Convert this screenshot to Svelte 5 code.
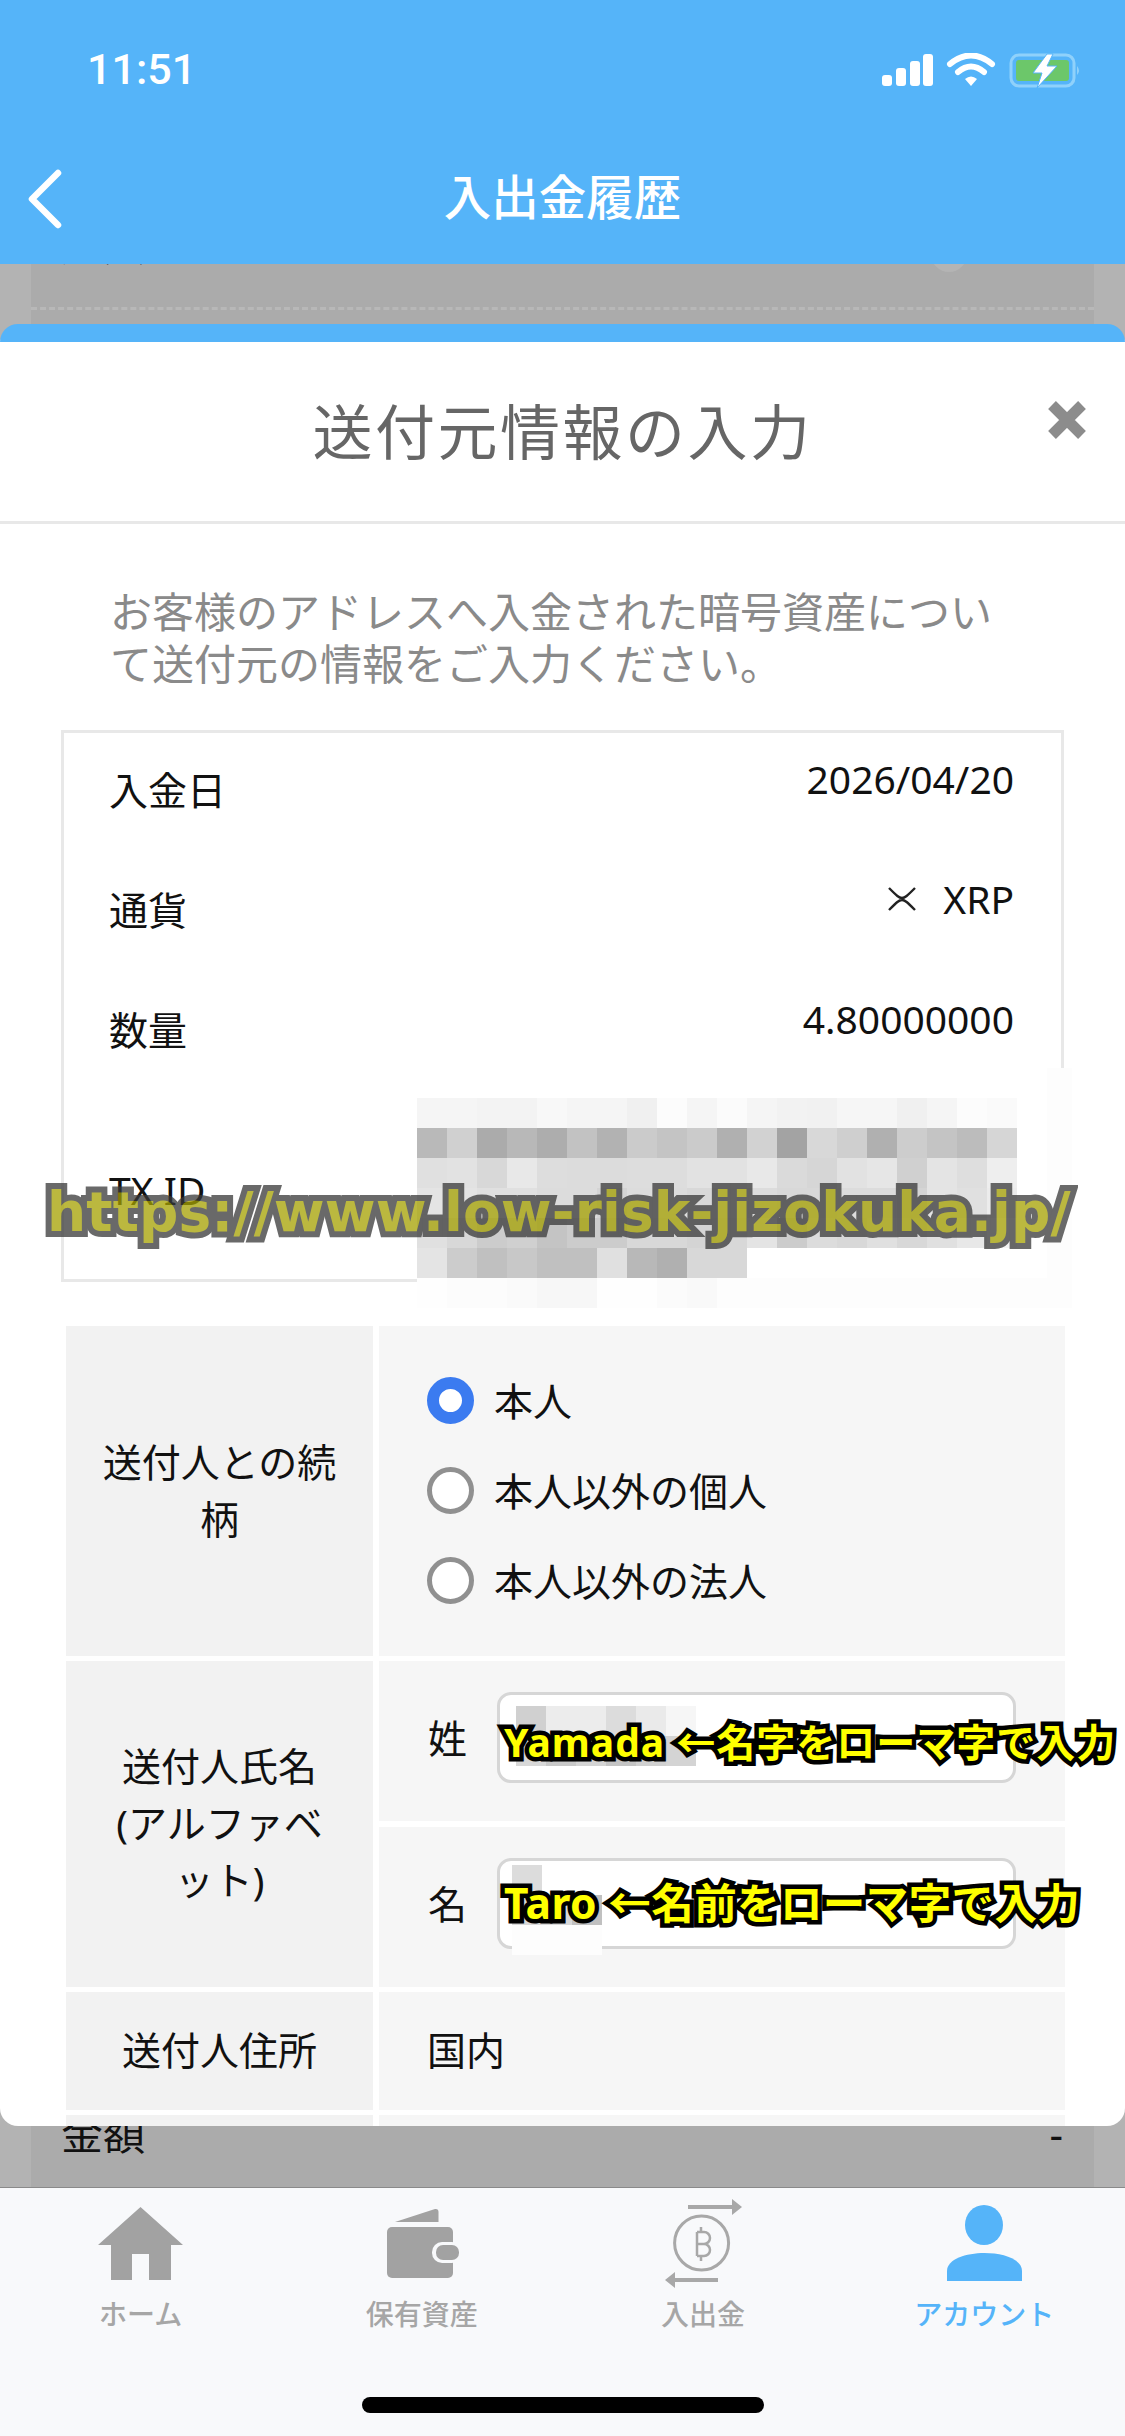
<script lang="ts">
  // mosaic cells that hide the tx id and the typed names
  const txRows = [
    ["#f5f5f5","#f5f5f5","#f3f3f3","#f3f3f3","#f8f8f8","#f5f5f5","#f5f5f5","#f0f0f0","#fcfcfc","#f5f5f5","#fbfbfb","#f5f5f5","#f2f2f2","#f1f1f1","#f6f6f6","#f6f6f6","#f0f0f0","#f5f5f5","#fcfcfc","#fafafa"],
    ["#b9b9b9","#d0d0d0","#ababab","#b8b8b8","#adadad","#c2c2c2","#b2b2b2","#cbcbcb","#c4c4c4","#cbcbcb","#b0b0b0","#d2d2d2","#a3a3a3","#d8d8d8","#cfcfcf","#b0b0b0","#cdcdcd","#c4c4c4","#bcbcbc","#d6d6d6"],
    ["#e0e0e0","#e2e2e2","#d8d8d8","#e8e8e8","#dddddd","#dcdcdc","#dcdcdc","#dddddd","#dddddd","#e2e2e2","#e2e2e2","#e8e8e8","#dadada","#d6d6d6","#e2e2e2","#e6e6e6","#d0d0d0","#e4e4e4","#dedede","#eeeeee"],
    ["#e4e4e4","#e4e4e4","#e0e0e0","#e0e0e0","#dcdcdc","#dcdcdc","#d4d4d4","#dcdcdc","#dcdcdc","#d8d8d8","#dcdcdc","#dcdcdc","#d8d8d8","#d8d8d8","#dcdcdc","#dcdcdc","#d4d4d4","#e4e4e4","#e0e0e0","#ececec"],
    ["#e0e0e0","#d8d8d8","#cccccc","#d0d0d0","#c4c4c4","#cccccc","#cccccc","#d8d8d8","#d8d8d8","#d4d4d4","#d8d8d8","#e4e4e4","#cccccc","#dcdcdc","#d8d8d8","#e0e0e0","#d8d8d8","#e0e0e0","#e8e8e8","#f4f4f4"],
    ["#e4e4e4","#cccccc","#c0c0c0","#c8c8c8","#c0c0c0","#c0c0c0","#e0e0e0","#b8b8b8","#b0b0b0","#d8d8d8","#d8d8d8"],
    ["#fefefe","#fcfcfc","#fcfcfc","#fafafa","#f7f7f7","#f7f7f7","#fefefe","#fefefe","#fbfbfb","#f9f9f9"]
  ];
  const lastNameRows = [
    ["#d0d0d0","#ececec","#ececec","#dcdcdc","#eaeaea","#f6f6f6"],
    ["#d8d8d8","#c8c8c8","#d4d4d4","#c4c4c4","#d0d0d0","#d4d4d4"]
  ];
  const firstNameRows = [["#dcdcdc"], ["#d8d8d8","#d8d8d8","#c0c0c0"]];

  const info = [
    { label: "入金日", value: "2026/04/20" },
    { label: "通貨", value: "XRP", coin: true },
    { label: "数量", value: "4.80000000" }
  ];
  const relations = ["本人", "本人以外の個人", "本人以外の法人"];
  const tabs = [
    { label: "ホーム", icon: "home" },
    { label: "保有資産", icon: "wallet" },
    { label: "入出金", icon: "coin" },
    { label: "アカウント", icon: "person", active: true }
  ];
</script>

<div class="page">
  <header class="top">
    <div class="status">
      <span class="time">11:51</span>
      <svg class="status-icons" viewBox="0 0 200 36" aria-hidden="true">
        <rect x="0" y="22" width="10" height="11" rx="3" fill="#fff" />
        <rect x="14" y="15" width="10" height="18" rx="3" fill="#fff" />
        <rect x="28" y="8" width="10" height="25" rx="3" fill="#fff" />
        <rect x="41" y="1" width="10" height="32" rx="3" fill="#fff" />
        <path d="M68 11 Q89 -6 110 11" fill="none" stroke="#fff" stroke-width="6" stroke-linecap="round" />
        <path d="M76 19 Q89 8 102 19" fill="none" stroke="#fff" stroke-width="6" stroke-linecap="round" />
        <path d="M83 26 Q89 21 95 26 L89 33Z" fill="#fff" />
        <rect x="129" y="2" width="63" height="31" rx="8" fill="none" stroke="#8fd1fb" stroke-width="3" />
        <rect x="134" y="7" width="53" height="21" rx="3" fill="#6cc76a" />
        <path d="M195 13 Q199 17.500 195 22Z" fill="#8fd1fb" />
        <path d="M165 1 L151 20 H160 L155 35 L175 13 H165 L171 1Z" fill="#fff" stroke="#55b4f9" stroke-width="1" />
      </svg>
    </div>
    <div class="nav">
      <svg class="back" viewBox="0 0 36 60" aria-hidden="true">
        <path d="M31 4 L5 30 L31 56" fill="none" stroke="#fff" stroke-width="6.500" stroke-linecap="round" stroke-linejoin="round" />
      </svg>
      <h1>入出金履歴</h1>
    </div>
  </header>

  <main class="behind">
    <div class="behind-card">
      <div class="behind-top">
        <span class="clipped">追入</span>
        <span class="dot"></span>
      </div>
      <div class="dashed"></div>
      <div class="behind-bottom">
        <span>金額</span>
        <span>-</span>
      </div>
    </div>
  </main>

  <nav class="tabs">
    {#each tabs as tab}
      <div class="tab" class:active={tab.active}>
        <svg class="tab-icon" viewBox="0 0 100 92" aria-hidden="true">
          {#if tab.icon === "home"}
            <path d="M49.500 8 L7 46 H20 V81 H41 V55 H58 V81 H80 V46 H92Z" fill="#a2a2a2" />
          {:else if tab.icon === "wallet"}
            <path d="M23 23 L63 10 Q66.500 9.500 66.500 13 V23Z" fill="#a2a2a2" />
            <rect x="15" y="28" width="66" height="51" rx="5" fill="#a2a2a2" />
            <rect x="60" y="43" width="30" height="21" rx="10" fill="#f8f9fb" />
            <rect x="64" y="46" width="23" height="15" rx="7" fill="#a2a2a2" />
          {:else if tab.icon === "coin"}
            <circle cx="48.600" cy="44" r="27" fill="none" stroke="#a8a8a8" stroke-width="3" />
            <path d="M44 33 V57 M44 33 H51 A6 6 0 0 1 51 45 H44 M51 45 A6 6 0 0 1 51 57 H44 M48 28 V33 M48 57 V62" fill="none" stroke="#a8a8a8" stroke-width="2.500" />
            <path d="M35 6 H79 V0 L89 8 L79 16 V10 H35Z" fill="#a8a8a8" />
            <path d="M65 79 H22 V73 L12 81 L22 89 V83 H65Z" fill="#a8a8a8" />
          {:else}
            <ellipse cx="50" cy="26" rx="19" ry="20" fill="#55b4f9" />
            <path d="M13 82 V72 C13 60 32 54 50.500 54 C69 54 88 60 88 72 V82Z" fill="#55b4f9" />
          {/if}
        </svg>
        <span>{tab.label}</span>
      </div>
    {/each}
    <div class="home-bar"></div>
  </nav>

  <section class="modal">
    <div class="modal-head">
      <h2>送付元情報の入力</h2>
      <svg class="close" viewBox="0 0 40 40" aria-hidden="true">
        <path d="M5 5 L35 35 M35 5 L5 35" stroke="#8c8c8c" stroke-width="11" />
      </svg>
    </div>
    <p class="desc">お客様のアドレスへ入金された暗号資産について送付元の情報をご入力ください。</p>

    <div class="info">
      {#each info as row}
        <div class="info-row">
          <span class="info-label">{row.label}</span>
          <span class="info-value">
            {#if row.coin}
              <svg class="xrp" viewBox="0 0 30 26" aria-hidden="true">
                <path d="M2 2 C10 10 12 12 15 12 C18 12 20 10 28 2 M2 24 C10 16 12 14 15 14 C18 14 20 16 28 24" fill="none" stroke="#222" stroke-width="2.400" />
              </svg>
            {/if}
            {row.value}
          </span>
        </div>
      {/each}
      <div class="info-row tx">
        <span class="info-label">TX ID</span>
      </div>
    </div>

    <div class="form">
      <div class="form-row">
        <div class="head-cell">送付人との続柄</div>
        <div class="body-cell radios">
          {#each relations as label, i}
            <div class="radio-line">
              <span class="radio" class:on={i === 0}></span>
              <span>{label}</span>
            </div>
          {/each}
        </div>
      </div>
      <div class="form-row">
        <div class="head-cell">送付人氏名(アルファベット)</div>
        <div class="name-cells">
          <div class="body-cell name-cell">
            <span class="name-label">姓</span>
            <div class="name-input"></div>
          </div>
          <div class="body-cell name-cell">
            <span class="name-label">名</span>
            <div class="name-input"></div>
          </div>
        </div>
      </div>
      <div class="form-row">
        <div class="head-cell short">送付人住所</div>
        <div class="body-cell plain">国内</div>
      </div>
      <div class="form-row">
        <div class="head-cell short"></div>
        <div class="body-cell plain"></div>
      </div>
    </div>
  </section>

  <!-- pasted over the screenshot afterwards: mosaics and captions -->
  <div class="patch tx-patch"></div>
  <div class="patch tx-patch-bottom"></div>
  <div class="mosaic tx-mosaic">
    {#each txRows as row}
      <div class="mosaic-row">
        {#each row as c}<i style="background:{c}"></i>{/each}
      </div>
    {/each}
  </div>
  <div class="mosaic last-mosaic">
    {#each lastNameRows as row}
      <div class="mosaic-row">
        {#each row as c}<i style="background:{c}"></i>{/each}
      </div>
    {/each}
  </div>
  <div class="patch first-patch"></div>
  <div class="mosaic first-mosaic">
    {#each firstNameRows as row}
      <div class="mosaic-row">
        {#each row as c}<i style="background:{c}"></i>{/each}
      </div>
    {/each}
  </div>

  <div class="url-mark">https://www.low-risk-jizokuka.jp/</div>
  <div class="note note-last">Yamada ←名字をローマ字で入力</div>
  <div class="note note-first">Taro ←名前をローマ字で入力</div>
</div>

<style>
  :global(body) {
    margin: 0;
    background: #fff;
  }

  .page {
    position: relative;
    width: 1125px;
    height: 2436px;
    overflow: hidden;
    display: flex;
    flex-direction: column;
    font-family: "Noto Sans", "Noto Sans CJK JP", sans-serif;
    color: #111;
  }

  .top {
    height: 264px;
    flex: none;
    background: #55b4f9;
    color: #fff;
    box-sizing: border-box;
  }

  .status {
    height: 132px;
    display: flex;
    justify-content: space-between;
    padding: 43px 43px 0 87px;
    box-sizing: border-box;
  }

  .time {
    font-family: Roboto, sans-serif;
    font-weight: 500;
    font-size: 43px;
    line-height: 52px;
  }

  .status-icons {
    width: 200px;
    height: 36px;
    margin-top: 10px;
  }

  .nav {
    position: relative;
    height: 132px;
    display: flex;
    justify-content: center;
    align-items: flex-start;
  }

  .back {
    position: absolute;
    left: 27px;
    top: 37px;
    width: 36px;
    height: 60px;
  }

  h1 {
    margin: 32px 0 0;
    font-size: 47.500px;
    line-height: 62px;
    font-weight: 500;
    font-family: "Noto Sans CJK JP", sans-serif;
  }

  .behind {
    flex: 1;
    background: #b3b3b3;
    padding: 0 31px;
    min-height: 0;
  }

  .behind-card {
    height: 100%;
    background: #ababab;
    display: flex;
    flex-direction: column;
    overflow: hidden;
  }

  .behind-top {
    height: 43px;
    position: relative;
    flex: none;
  }

  .clipped {
    position: absolute;
    left: 30px;
    top: -46px;
    font-size: 42px;
    line-height: 54px;
    color: #111;
  }

  .dot {
    position: absolute;
    right: 127px;
    top: -28px;
    width: 36px;
    height: 36px;
    border-radius: 50%;
    background: #b4b4b4;
  }

  .dashed {
    border-top: 3px dashed #b8b8b8;
    flex: none;
  }

  .behind-bottom {
    margin-top: auto;
    display: flex;
    justify-content: space-between;
    padding: 0 31px 26px 30px;
    font-size: 42px;
    line-height: 54px;
  }

  .tabs {
    position: relative;
    flex: none;
    height: 249px;
    box-sizing: border-box;
    background: #f8f9fb;
    border-top: 1px solid #8a8a8a;
    display: grid;
    grid-template-columns: repeat(4, 1fr);
    padding-top: 11px;
  }

  .tab {
    display: flex;
    flex-direction: column;
    align-items: center;
    color: #a6a6a6;
    font-size: 28px;
    line-height: 36px;
    font-weight: 500;
    font-family: "Noto Sans CJK JP", sans-serif;
  }

  .tab.active {
    color: #55b4f9;
  }

  .tab-icon {
    width: 100px;
    height: 92px;
    margin-bottom: 4px;
  }

  .home-bar {
    position: absolute;
    left: 362px;
    bottom: 23px;
    width: 402px;
    height: 16px;
    border-radius: 8px;
    background: #000;
  }

  .modal {
    position: absolute;
    left: 0;
    right: 0;
    top: 324px;
    height: 1802px;
    box-sizing: border-box;
    border-top: 18px solid #55b4f9;
    border-radius: 18px;
    background: #fff;
    overflow: hidden;
  }

  .modal-head {
    position: relative;
    height: 182px;
    box-sizing: border-box;
    border-bottom: 3px solid #e8e8e8;
    text-align: center;
  }

  h2 {
    margin: 0;
    padding-top: 47px;
    font-size: 60px;
    line-height: 80px;
    font-weight: 400;
    letter-spacing: 2.500px;
    color: #666;
    font-family: "Noto Sans CJK JP", sans-serif;
  }

  .close {
    position: absolute;
    left: 1047px;
    top: 58px;
    width: 40px;
    height: 40px;
  }

  .desc {
    margin: 0;
    padding: 60px 110px 0;
    font-size: 42px;
    line-height: 52px;
    color: #8a8a8a;
    font-family: "Noto Sans CJK JP", sans-serif;
  }

  .info {
    margin: 42px 61px 0;
    height: 552px;
    box-sizing: border-box;
    border: 3px solid #e8e8e8;
  }

  .info-row {
    height: 120px;
    display: flex;
    justify-content: space-between;
    padding: 0 47px 0 45px;
    font-size: 39px;
    line-height: 54px;
  }

  .info-row.tx {
    height: 186px;
  }

  .info-label {
    margin-top: 30px;
  }

  .tx .info-label {
    margin-top: 70px;
  }

  .info-value {
    margin-top: 19px;
    display: flex;
    align-items: center;
    height: 54px;
  }

  .xrp {
    width: 30px;
    height: 26px;
    margin-right: 26px;
  }

  .form {
    margin: 44px 60px 0 66px;
    display: flex;
    flex-direction: column;
    gap: 5px;
    font-size: 39px;
    line-height: 57px;
  }

  .form-row {
    display: grid;
    grid-template-columns: 307px 1fr;
    gap: 6px;
  }

  .head-cell {
    background: #f2f2f2;
    padding: 0 32px 3px;
    display: flex;
    align-items: center;
    justify-content: center;
    text-align: center;
  }

  .body-cell {
    background: #f6f6f6;
  }

  .radios {
    height: 330px;
    box-sizing: border-box;
    display: flex;
    flex-direction: column;
    justify-content: center;
    gap: 42px;
    padding: 0 0 2px 48px;
  }

  .radio-line {
    display: flex;
    align-items: center;
    gap: 20px;
    height: 48px;
  }

  .radio {
    width: 47px;
    height: 47px;
    box-sizing: border-box;
    border-radius: 50%;
    border: 5px solid #909090;
    background: #fff;
  }

  .radio.on {
    border: 12px solid #3b7bf0;
  }

  .name-cells {
    display: flex;
    flex-direction: column;
    gap: 6px;
  }

  .name-cell {
    height: 160px;
    display: flex;
    align-items: center;
    padding-left: 49px;
  }

  .name-label {
    width: 69px;
    flex: none;
    margin-bottom: 7px;
  }

  .name-input {
    width: 519px;
    height: 91px;
    margin-bottom: 7px;
    box-sizing: border-box;
    border: 3px solid #d6d6d6;
    border-radius: 14px;
    background: #fff;
  }

  .plain {
    height: 118px;
    display: flex;
    align-items: center;
    padding: 0 0 4px 48px;
    box-sizing: border-box;
  }

  .short {
    height: 118px;
    box-sizing: border-box;
  }

  .mosaic {
    position: absolute;
  }

  .mosaic-row {
    display: flex;
    height: 30px;
  }

  .mosaic-row i {
    display: block;
    width: 30px;
    height: 30px;
  }

  .patch {
    position: absolute;
    background: #fdfdfd;
  }

  .tx-patch {
    left: 1047px;
    top: 1068px;
    width: 25px;
    height: 240px;
  }

  .tx-patch-bottom {
    left: 417px;
    top: 1278px;
    width: 655px;
    height: 30px;
  }

  .tx-mosaic {
    left: 417px;
    top: 1098px;
  }

  .last-mosaic {
    left: 516px;
    top: 1706px;
  }

  .first-patch {
    left: 512px;
    top: 1925px;
    width: 90px;
    height: 30px;
  }

  .first-mosaic {
    left: 512px;
    top: 1865px;
  }

  .url-mark {
    position: absolute;
    left: 47px;
    top: 1172px;
    font-size: 55px;
    line-height: 80px;
    font-weight: 700;
    letter-spacing: 0.100px;
    white-space: nowrap;
    color: #a5a100;
    -webkit-text-stroke: 12px #383838;
    paint-order: stroke fill;
    opacity: 0.75;
    font-family: "DejaVu Sans", sans-serif;
  }

  .note {
    position: absolute;
    left: 504px;
    line-height: 56px;
    font-weight: 700;
    white-space: nowrap;
    color: #ff0;
    -webkit-text-stroke: 9px #000;
    paint-order: stroke fill;
    font-family: "Noto Sans", "Noto Sans CJK JP", sans-serif;
  }

  .note-last {
    top: 1714px;
    font-size: 39px;
    letter-spacing: 1px;
  }

  .note-first {
    top: 1875px;
    font-size: 42.500px;
    letter-spacing: 0.400px;
  }
</style>
